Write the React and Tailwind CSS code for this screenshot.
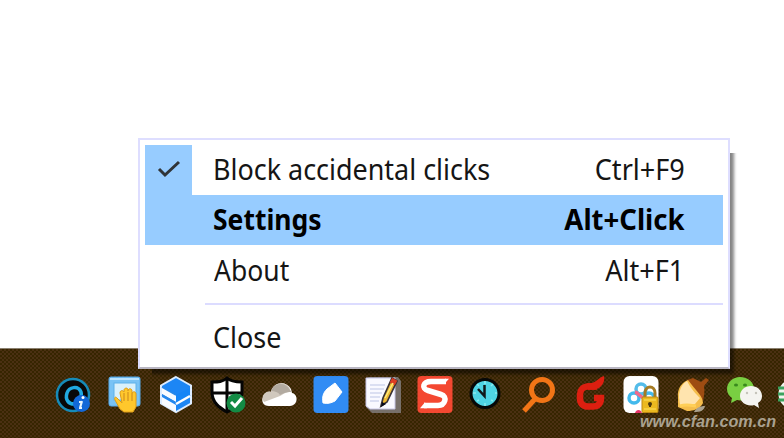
import React from "react";

function Tray({ children }) {
  return (
    <div className="flex w-[51.7px] shrink-0 justify-center">
      <svg className="h-10 w-10 shrink-0" viewBox="0 0 40 40" fill="none">
        {children}
      </svg>
    </div>
  );
}

function Row({ label, keys, labelClass = "", keysClass = "", className = "" }) {
  return (
    <div className={"flex items-center justify-between " + className}>
      <span className={"origin-left whitespace-nowrap " + labelClass}>{label}</span>
      <span className={"origin-right whitespace-nowrap " + keysClass}>{keys}</span>
    </div>
  );
}

function Menu() {
  return (
    <div className="absolute left-[138px] top-[138px] h-[231px] w-[592px] border-2 border-[#dedeff] border-b-[#b9b6c2] bg-white pt-[5px] pl-[5px] pr-[5px] font-['Noto_Sans','Open_Sans',sans-serif] text-[28.5px] leading-[48px] text-[#151515] shadow-[4px_5px_3px_rgba(0,0,0,0.48)] [clip-path:polygon(0_0,100%_0,100%_15px,120%_15px,120%_120%,14px_120%,14px_100%,0_100%)]">
      <div className="flex h-[50px]">
        <div className="flex w-[47px] items-center justify-center bg-[#97ccff]">
          <svg width="24" height="20" viewBox="0 0 24 20" fill="none">
            <path d="M2 9 8 15 22 2" stroke="#303438" strokeWidth="3" />
          </svg>
        </div>
        <Row className="grow pb-[2px] pl-[21px] pr-[38px]" label="Block accidental clicks" keys="Ctrl+F9" labelClass="scale-x-[0.945]" keysClass="scale-x-[0.95]" />
      </div>
      <Row className="h-[50px] bg-[#97ccff] pb-[2px] pl-[68px] pr-[38px] font-bold text-black" label="Settings" keys="Alt+Click" labelClass="scale-x-[0.93]" keysClass="scale-x-[0.965]" />
      <Row className="h-[51px] pb-[2px] pl-[69px] pr-[39px]" label="About" keys="Alt+F1" labelClass="scale-x-[0.93]" keysClass="scale-x-[0.95]" />
      <div className="mt-[7px] ml-[60px] h-[2px] bg-[#dcdcff]" />
      <Row className="mt-[8px] h-[50px] pb-[3px] pl-[68px]" label="Close" labelClass="scale-x-[0.945]" />
    </div>
  );
}

function TrayIcons() {
  return (
    <div className="flex pl-[47px] pt-[26px]">
      <Tray>
        <circle cx="20" cy="20" r="16" fill="#080808" stroke="#168bb8" strokeWidth="2.5" />
        <path d="M23 29C15 30 12 24 14 18c2-6 11-8 14-1 1 3 0 5-1 7" stroke="#20a9e0" strokeWidth="3.5" />
        <circle cx="28.500" cy="28.500" r="8.500" fill="#1268d8" />
        <path d="m29 26-2 7m-1-6h3m-3 6h3" stroke="#e7f5ff" strokeWidth="2.2" />
        <circle cx="30" cy="22.500" r="1.500" fill="#fff" />
      </Tray>
      <Tray>
        <rect x="4" y="2" width="31" height="29" rx="2" fill="#79c3f5" stroke="#57acec" />
        <path d="M5 4h29" stroke="#b9e3ff" strokeWidth="2" />
        <rect x="9" y="8" width="22" height="17" fill="#d9f1fc" stroke="#5fb2ea" />
        <path d="M17 28 12 23c-2-2-3 0-2 2l5 9 4 3h9l3-5V19c0-3-4-3-4 0v-3c0-3-4-3-4 0v-1c0-3-4-2-4 0v2c-1-2-4-2-4 1z" fill="#ffc72c" stroke="#dc9c19" />
        <path d="M19 18v8m4-9v9m4-7v7" stroke="#d29120" strokeWidth="1.200" />
      </Tray>
      <Tray>
        <path d="m20 2 15 8.500v18L20 37 5 28.500v-18z" fill="#1c86f5" stroke="#dcecff" strokeWidth="2" />
        <path d="m6 12 14 8v7L6 19zM6 22l14 8v7L6 29z" fill="#f8fbff" />
        <path d="m6 20 14 8 14-8M6 12l14 8" stroke="#2787e8" strokeWidth="1.500" />
        <path d="m20 20 14-7v7l-14 8z" fill="#1585f6" />
        <path d="m20 29 14-8" stroke="#fff" strokeWidth="2.400" />
      </Tray>
      <Tray>
        <path d="M19 3c4 4 10 4 15 4v10c0 11-8 16-15 20C12 33 4 28 4 17V7c6 0 11 0 15-4z" fill="#fff" stroke="#050505" strokeWidth="3" />
        <path d="M19 4v32M5 18h28" stroke="#050505" strokeWidth="3" />
        <circle cx="28" cy="28" r="9.500" fill="#138b45" />
        <path d="m23 27 4 4 7-8" stroke="#fff" strokeWidth="3" />
      </Tray>
      <Tray>
        <path d="M9 31C3 31 1 26 3 22c1-4 5-6 8-5 2-10 15-12 20-3l1 4c6 1 7 12-2 13z" fill="#fff" />
        <path d="M11 17c2-10 15-12 19-3l1 3c-6 0-7 2-11 4L4 27c-4-6 2-12 7-10z" fill="#d0c8bd" />
        <path d="M11 16c3-8 14-10 19-1l1 2c-5 0-7 1-11 3-2-3-5-4-9-4z" fill="#b2aaa0" />
      </Tray>
      <Tray>
        <rect x="2.500" y="1" width="35" height="37" rx="4" fill="#318cf4" />
        <path d="M12 28c-1-6 0-10 4-14l8-6 7 9-7 9c-4 2-7 3-12 2z" fill="#fff" stroke="#fff" strokeLinejoin="round" />
      </Tray>
      <Tray>
        <path d="m3 3 4-1h28l3 4v32H9l-6-6z" fill="#77706a" />
        <path d="M3 3h29v31H7l-4-3z" fill="#f9f9ff" stroke="#c6c4e5" />
        <path d="M7 10h15M7 14h14M7 18h12M7 22h10M7 26h9" stroke="#bdc5e5" />
        <path d="m18 31 2-8L29 3l5 3-10 21z" fill="#edb833" stroke="#393236" strokeWidth="1.700" />
        <path d="m28 5 5 3" stroke="#dd3d22" strokeWidth="5" />
        <path d="m22 23 8-15" stroke="#ffeb7b" strokeWidth="1.500" />
        <path d="m18 32 1-5 4 2z" fill="#080b1b" />
      </Tray>
      <Tray>
        <rect x="2.500" y="1" width="35" height="37" rx="4" fill="#f44831" />
        <path d="M31 6.500H16c-8 0-10 7-3 9l13 4c7 2 4 11-3 11H9" stroke="#fff" strokeWidth="5.500" />
        <path d="M30 3.800h4l-5 5.500zM10 27.200 5 33.300h7z" fill="#fff" />
      </Tray>
      <Tray>
        <circle cx="19" cy="18.500" r="14" fill="#4ed4e4" stroke="#060808" strokeWidth="3" />
        <path d="M18.500 10v11L12 14" stroke="#101819" strokeWidth="2.500" />
        <path d="M19 6v3m10 9h2m-12 10v3M7 18h3m1-9 2 2m14-2-2 2M11 26l2-1m14 1-2-1" stroke="#8beaf0" strokeWidth="1.500" />
      </Tray>
      <Tray>
        <circle cx="24" cy="15" r="10.500" stroke="#f27516" strokeWidth="5" />
        <path d="m17 24-11 12" stroke="#f27516" strokeWidth="5" />
      </Tray>
      <Tray>
        <path d="M27 11.500H18c-5 0-8 4-8 8v4c0 5 3 8 8 8h5c5 0 8-3 8-8.500h-7" stroke="#dd1f10" strokeWidth="6.500" />
        <path d="M17 8.200c5 0 7-.5 10-3 2-1 3-3 7-4.200 1 5-1 9-5 12l-4 1.700h-7z" fill="#dd1f10" />
      </Tray>
      <Tray>
        <rect x="2.500" y="1" width="35" height="37" rx="6" fill="#fff" />
        <circle cx="13" cy="23" r="5" stroke="#42b9ec" strokeWidth="3.500" />
        <circle cx="20" cy="14" r="5" stroke="#54bce9" strokeWidth="3.500" />
        <circle cx="28" cy="23" r="5" stroke="#42b9ec" strokeWidth="3.500" />
        <path d="M14 17c4 1 5 6 10 6" stroke="#f16a8a" strokeWidth="3.500" />
        <path d="M14 38c1-4 6-4 7 0z" fill="#e83368" />
        <path d="M24 23v-5c0-8 10-8 10 0v5" stroke="#a57b24" strokeWidth="3" />
        <rect x="21" y="22" width="16" height="15.500" rx="1" fill="#ebb91f" stroke="#bd8914" />
        <path d="M23 25h12M23 34h12" stroke="#ffe361" />
        <circle cx="29" cy="29" r="2" fill="#4d390d" />
        <path d="M29 29v3" stroke="#4d390d" strokeWidth="2" />
      </Tray>
      <Tray>
        <path d="m14 5 6-2 8 4 5-4 3 2-5 6c1 5 0 10-1 15z" fill="#9d4c12" />
        <path d="M15 5C8 8 4 14 5 23v9l9 4c7 0 13-2 16-8 0-7-7-12-15-23z" fill="#f5bd4b" />
        <path d="M14 6C9 9 6 15 6 22l1 8 15-1 5-6c-4-4-9-9-13-17z" fill="#ffe4ae" />
        <path d="M7 31c6-2 10-1 16 0" stroke="#ffcf57" strokeWidth="3" />
      </Tray>
      <Tray>
        <path d="M15 2C8 2 2 7 2 14c0 4 2 7 5 9l-1 5 6-3c10 2 17-4 17-11C29 7 23 2 15 2z" fill="#79cf42" />
        <ellipse cx="11" cy="10" rx="2" ry="1.500" fill="#39891e" />
        <ellipse cx="20" cy="10" rx="2" ry="1.500" fill="#39891e" />
        <path d="M26 11c-6 0-11 4-11 10 0 7 8 11 14 9l5 3-1-5c3-2 4-4 4-7 0-6-5-10-11-10z" fill="#f4f4f0" />
        <circle cx="22" cy="18" r="1.200" fill="#c4c3ba" />
        <circle cx="31" cy="18" r="1.200" fill="#c4c3ba" />
      </Tray>
      <Tray>
        <circle cx="18" cy="19" r="15.500" fill="#eff6ed" />
        <path d="M2 13h12M2 19h12M2 25h12" stroke="#3ba25e" strokeWidth="3" />
      </Tray>
    </div>
  );
}

export default function App() {
  return (
    <main className="relative flex h-[438px] w-[784px] flex-col justify-end overflow-hidden bg-white">
      <div className="h-[90px] w-full overflow-hidden border-t border-[#8a806f] bg-[repeating-conic-gradient(#362500_0_25%,#4a3012_0_50%)] bg-[length:4px_4px]">
        <TrayIcons />
      </div>
      <Menu />
      <div className="absolute left-[640px] top-[411px] whitespace-nowrap font-['Liberation_Sans',Arial,sans-serif] text-[16.2px] font-bold italic leading-[20px] text-[#a9a18f]">www.cfan.com.cn</div>
      <svg className="absolute left-[694px] top-[406px] h-[7px] w-[12px]" viewBox="0 0 12 7">
        <path d="M0 6c2-4 6-6 11-6-1 5-5 6-11 6z" fill="#a9a18f" />
      </svg>
    </main>
  );
}
